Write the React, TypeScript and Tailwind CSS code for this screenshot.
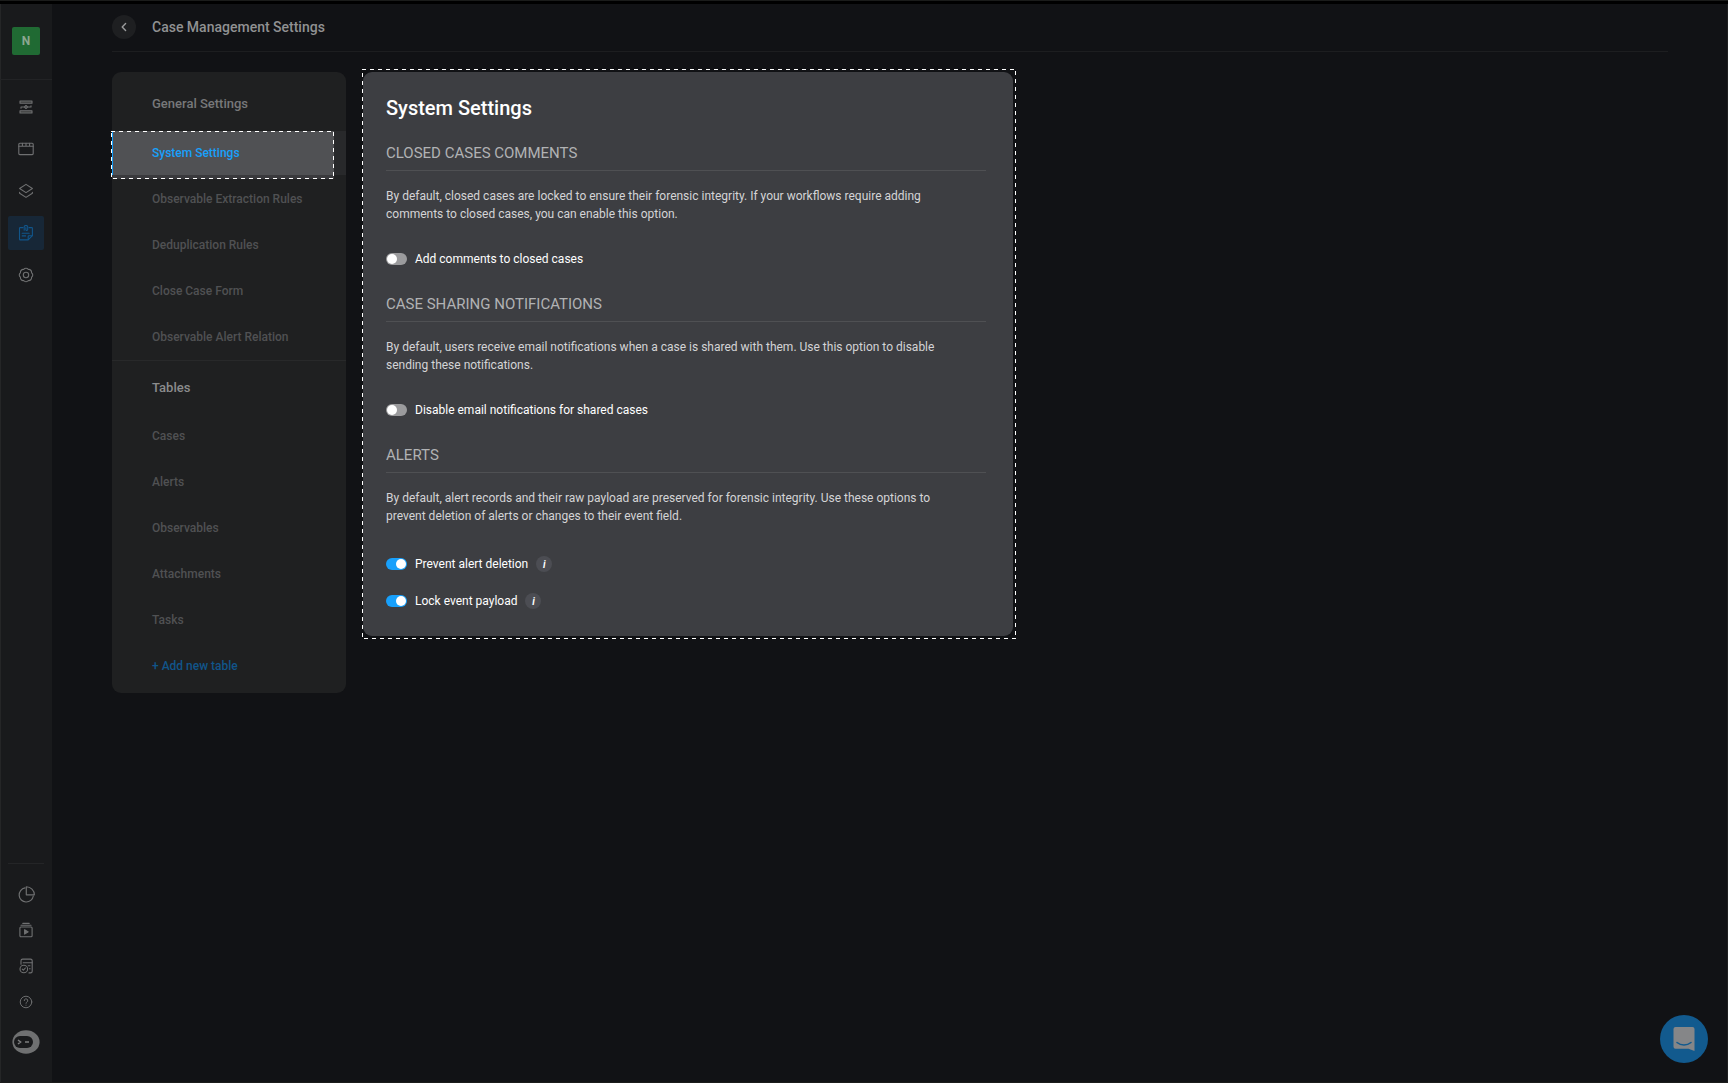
import { useId, useState } from 'react'
import type { ReactNode } from 'react'
import clsx from 'clsx'

interface IconProps {
  children: ReactNode
  size?: number
}

function Icon({ children, size = 16 }: IconProps) {
  return (
    <svg
      width={size}
      height={size}
      viewBox="0 0 16 16"
      fill="none"
      stroke="currentColor"
      strokeWidth={1.1}
      strokeLinecap="round"
      strokeLinejoin="round"
      aria-hidden="true"
    >
      {children}
    </svg>
  )
}

const primaryNav = [
  {
    label: 'Playbooks',
    icon: (
      <Icon>
        <path d="M2 2h12v2.2H2zM2 11.8h12V14H2z" fill="currentColor" fillOpacity="0.4" />
        <path d="M3 8h2.8M10.2 8H13M3 8v1.2M13 8V6.8" />
        <path d="M8 6.5 9.6 8 8 9.5 6.4 8z" />
      </Icon>
    ),
  },
  {
    label: 'Workspaces',
    icon: (
      <Icon>
        <rect x="0.8" y="2.2" width="14.4" height="11.4" rx="1" />
        <path d="M0.8 5.2h14.4M4.4 2.2v3M8 2.2v3M11.6 2.2v3" />
      </Icon>
    ),
  },
  {
    label: 'Assets',
    icon: (
      <Icon>
        <path d="M8 1.4 14.4 5.5 8 9.6 1.6 5.5z" />
        <path d="M1.6 9.3v.9L8 14.4l6.4-4.2v-.9" />
      </Icon>
    ),
  },
  {
    label: 'Case Management',
    active: true,
    icon: (
      <Icon>
        <path d="M5 2.6H2.2a.7.7 0 0 0-.7.7v10.9c0 .4.3.7.7.7h7.9l4.3-4.2V3.3a.7.7 0 0 0-.7-.7H11" />
        <path d="M10.2 14.6v-3.4c0-.3.2-.5.5-.5h3.4M4.2 8.2h7M4.2 10.9h3.4" />
        <path d="M6.2 5.3V2.6a1.8 1.8 0 1 1 3.5 0v2a.9.9 0 0 1-1.8 0v-2" />
      </Icon>
    ),
  },
  {
    label: 'Settings',
    icon: (
      <Icon>
        <path d="M5.7 2.46a2.8 2.8 0 0 1 4.6 0a2.8 2.8 0 0 1 3.24 3.24a2.8 2.8 0 0 1 0 4.6a2.8 2.8 0 0 1-3.24 3.24a2.8 2.8 0 0 1-4.6 0a2.8 2.8 0 0 1-3.24-3.24a2.8 2.8 0 0 1 0-4.6a2.8 2.8 0 0 1 3.24-3.24z" />
        <circle cx="8" cy="8" r="2.7" />
      </Icon>
    ),
  },
]

const secondaryNav = [
  {
    label: 'Dashboards',
    icon: (
      <Icon size={17}>
        <path d="M6.6 1.8a6.7 6.7 0 1 0 7.8 7.6" />
        <path d="M7.8.7v7.6h7.6A7.6 7.6 0 0 0 7.8.7z" />
      </Icon>
    ),
  },
  {
    label: 'Runs',
    icon: (
      <Icon>
        <rect x="1.9" y="5" width="12.2" height="9.8" rx="1" />
        <path d="M3 3.2h10M4.8 1.4h6.4" />
        <path d="M6.6 7.7v4.4L10.2 9.9z" fill="currentColor" />
      </Icon>
    ),
  },
  {
    label: 'Audit',
    icon: (
      <Icon>
        <path d="M3 6.2V2.8c0-1 .8-1.7 1.7-1.7h7.8c.9 0 1.7.7 1.7 1.7v10.4c0 1-.8 1.7-1.7 1.7H11" />
        <path d="M5.2 4.8h9M10.2 7.8H12M11.4 10.8h.8" />
        <circle cx="5.8" cy="11" r="3.8" />
        <path d="m4.3 11.1 1.1 1.1 2-2.2" />
      </Icon>
    ),
  },
  {
    label: 'Help',
    icon: (
      <Icon size={14}>
        <circle cx="8" cy="8" r="6.6" />
        <path d="M6 6.4a2 2 0 1 1 3 1.7c-.6.4-1 .8-1 1.4M8 11.6v.1" />
      </Icon>
    ),
  },
]

const generalItems = [
  'System Settings',
  'Observable Extraction Rules',
  'Deduplication Rules',
  'Close Case Form',
  'Observable Alert Relation',
]

const tableItems = ['Cases', 'Alerts', 'Observables', 'Attachments', 'Tasks']

// dashed frame, half of the stroke is clipped so the visible line is 1px
function DashedFrame({ className }: { className: string }) {
  return (
    <svg className={clsx('pointer-events-none absolute overflow-hidden', className)} aria-hidden="true">
      <rect width="100%" height="100%" fill="none" stroke="#ffffff" strokeWidth="2" strokeDasharray="4 4" />
    </svg>
  )
}

function Sidebar() {
  return (
    <aside className="flex w-[52px] shrink-0 flex-col items-center bg-[#191a1c] text-[#6f7071] shadow-[inset_1px_0_0_#252627]">
      <div className="flex h-[76px] w-full items-start justify-center border-b border-[#222325] pt-[23px]">
        <button className="size-7 rounded-xs bg-[#206a33] text-xs font-bold text-[#8ba790]">N</button>
      </div>

      <nav className="mt-[10px] flex flex-col gap-2">
        {primaryNav.map((item) => (
          <a
            key={item.label}
            href="#"
            aria-label={item.label}
            className={clsx(
              'flex h-[34px] w-9 items-center justify-center rounded-xs',
              item.active && 'bg-[#172737] text-[#11558a]'
            )}
          >
            {item.icon}
          </a>
        ))}
      </nav>

      <div className="mt-auto flex w-9 flex-col items-center border-t border-[#242527] pt-3 pb-7">
        {secondaryNav.map((item) => (
          <a key={item.label} href="#" aria-label={item.label} className="flex h-9 w-[18px] items-center justify-center">
            {item.icon}
          </a>
        ))}
        <button aria-label="Account" className="mt-[10px]">
          <svg width="28" height="24" viewBox="0 0 28 24" aria-hidden="true">
            <ellipse cx="14" cy="12" rx="13.6" ry="11.8" fill="#6f7071" />
            <rect x="2" y="6" width="19" height="12" rx="6" fill="#191a1c" />
            <path d="m6 10 2.6 2L6 14M13 12h4" fill="none" stroke="#7c7d7e" strokeWidth="1.5" />
          </svg>
        </button>
      </div>
    </aside>
  )
}

function SettingsMenu() {
  return (
    <nav className="w-[234px] shrink-0 rounded-[9px] bg-[#1f2021] pb-1 text-xs font-medium text-[#505153]">
      <h2 className="flex h-[58px] items-center pt-[6px] pl-10 text-[13px] text-[#77787a]">General Settings</h2>
      <ul className="border-b border-[#28292a]">
        {generalItems.map((name, i) => (
          <li key={name} className="relative flex h-[46px] items-center">
            {i === 0 ? (
              <>
                <div className="absolute inset-x-0 top-px h-11 bg-[#28292b]" />
                <div className="absolute top-px right-3 bottom-[-3px] left-0 bg-[#3a3a3d]" />
                <div className="absolute top-px right-3 left-0 h-11 border-l border-[#18a0fb] bg-[#505154]" />
                <a href="#" aria-current="page" className="relative pl-10 text-[#18a0fb]">
                  {name}
                </a>
                <DashedFrame className="top-px -left-px h-12 w-[223px]" />
              </>
            ) : (
              <a href="#" className="pl-10">
                {name}
              </a>
            )}
          </li>
        ))}
      </ul>

      <h2 className="flex h-[52px] items-center pt-px pl-10 text-[13px] text-[#8b8c8d]">Tables</h2>
      <ul>
        {tableItems.map((name) => (
          <li key={name} className="flex h-[46px] items-center pl-10">
            <a href="#">{name}</a>
          </li>
        ))}
      </ul>
      <button className="block h-[46px] pl-10 text-[#11558a]">+ Add new table</button>
    </nav>
  )
}

interface ToggleProps {
  label: string
  initial?: boolean
  info?: boolean
}

function Toggle({ label, initial = false, info = false }: ToggleProps) {
  const id = useId()
  const [on, setOn] = useState(initial)

  return (
    <div className="flex h-4 items-center gap-2">
      <input
        id={id}
        type="checkbox"
        role="switch"
        checked={on}
        onChange={(e) => setOn(e.target.checked)}
        className="h-3 w-[21px] appearance-none rounded-full bg-[#9b9b9d] before:m-px before:block before:size-[10px] before:rounded-full before:bg-white checked:bg-[#18a0fb] checked:before:ml-[10px]"
      />
      <label htmlFor={id} className="text-xs text-white">
        {label}
      </label>
      {info && (
        <button
          aria-label={`About: ${label}`}
          className="flex size-4 items-center justify-center rounded-full bg-[#4c4d53] text-[10px] font-bold text-white italic"
        >
          i
        </button>
      )}
    </div>
  )
}

interface SectionProps {
  title: string
  text: string
  children: ReactNode
}

function Section({ title, text, children }: SectionProps) {
  return (
    <section>
      <h2 className="border-b border-[#4f5053] pb-[7px] text-[15px] leading-5 text-[#b1b2b4] uppercase">{title}</h2>
      <p className="mt-4 max-w-[560px] text-xs leading-[18px] text-[#d4d4d6]">{text}</p>
      {children}
    </section>
  )
}

function SystemSettings() {
  return (
    <div className="relative w-[650px]">
      <div className="rounded-[9px] bg-[#3d3e42] pt-[22px] pr-[27px] pb-[27px] pl-[23px]">
        <h1 className="text-xl leading-[28px] font-medium text-white">System Settings</h1>
        <div className="mt-[21px] flex flex-col gap-[27px]">
          <Section
            title="Closed cases comments"
            text="By default, closed cases are locked to ensure their forensic integrity. If your workflows require adding comments to closed cases, you can enable this option."
          >
            <div className="mt-7">
              <Toggle label="Add comments to closed cases" />
            </div>
          </Section>
          <Section
            title="Case sharing notifications"
            text="By default, users receive email notifications when a case is shared with them. Use this option to disable sending these notifications."
          >
            <div className="mt-7">
              <Toggle label="Disable email notifications for shared cases" />
            </div>
          </Section>
          <Section
            title="Alerts"
            text="By default, alert records and their raw payload are preserved for forensic integrity. Use these options to prevent deletion of alerts or changes to their event field."
          >
            <div className="mt-[31px] flex flex-col gap-[21px]">
              <Toggle label="Prevent alert deletion" initial info />
              <Toggle label="Lock event payload" initial info />
            </div>
          </Section>
        </div>
      </div>
      <DashedFrame className="-top-[3px] -left-px h-[570px] w-[654px]" />
    </div>
  )
}

export default function App() {
  return (
    <div className="flex min-h-screen flex-col border-y border-[#1b1c1b] bg-[#111215] font-[Roboto,sans-serif]">
      <div className="h-[3px] bg-black" />
      <div className="flex grow border-r border-[#1e1f20]">
        <Sidebar />
        <main className="grow pr-[59px] pl-[60px]">
          <header className="flex h-12 items-center gap-4 border-b border-[#1d1e20] pb-[2px]">
            <button
              aria-label="Back"
              className="flex size-6 items-center justify-center rounded-full bg-[#1e1f21] text-[#9b9c9d]"
            >
              <Icon>
                <path d="M9.6 4.6 6.2 8l3.4 3.4" strokeWidth={1.4} />
              </Icon>
            </button>
            <p className="text-sm font-medium text-[#909192]">Case Management Settings</p>
          </header>
          <div className="mt-5 flex items-start gap-[17px]">
            <SettingsMenu />
            <SystemSettings />
          </div>
        </main>
      </div>

      <button
        aria-label="Open chat"
        className="fixed right-5 bottom-5 flex size-12 items-center justify-center rounded-full bg-[#125a8e]"
      >
        <svg width="22" height="24" viewBox="0 0 22 24" aria-hidden="true">
          <path d="M2.5 0h17A2 2 0 0 1 21.5 2v22l-6-2.2h-13a2 2 0 0 1-2-2V2a2 2 0 0 1 2-2z" fill="#858688" />
          <path d="M4 15.5c4 3.2 10 3.2 14 0" fill="none" stroke="#125a8e" strokeWidth="1.5" strokeLinecap="round" />
        </svg>
      </button>
    </div>
  )
}
